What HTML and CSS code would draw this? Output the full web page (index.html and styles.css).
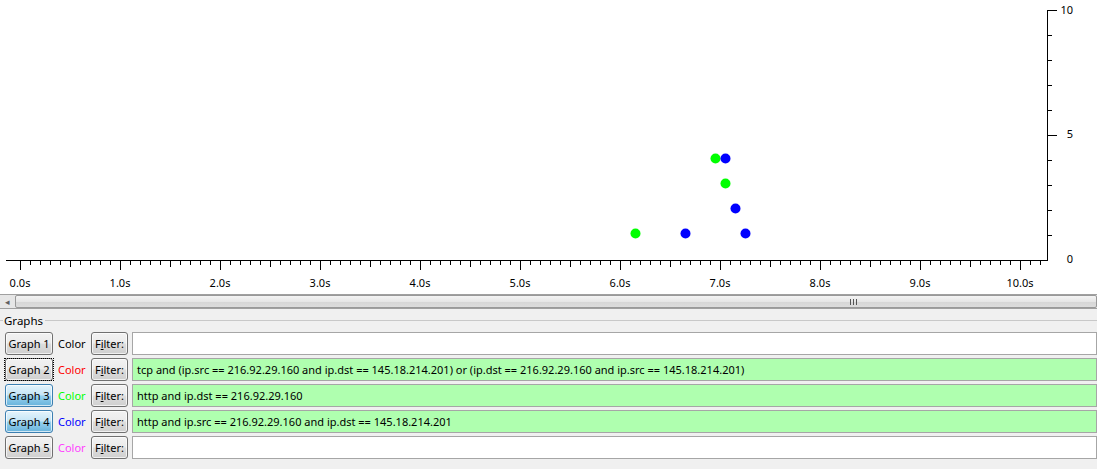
FILE: index.html
```html
<!DOCTYPE html>
<html>
<head>
<meta charset="utf-8">
<link rel="stylesheet" href="styles.css">
</head>
<body>
<div class="page">
  <svg class="plot" width="1097" height="294" viewBox="0 0 1097 294">
    <g stroke="#000" stroke-width="1" fill="none" shape-rendering="crispEdges">
      <path d="M6 260.5H1047.5V10.5H1057"/>
      <path id="ticks" d=""/>
    </g>
    <g class="ylab" font-size="11">
      <text x="1073" y="14" text-anchor="end">10</text>
      <text x="1073" y="138" text-anchor="end">5</text>
      <text x="1073" y="263" text-anchor="end">0</text>
    </g>
    <g class="xlab" font-size="11" text-anchor="middle">
      <text x="20" y="287">0.0s</text>
      <text x="120" y="287">1.0s</text>
      <text x="220" y="287">2.0s</text>
      <text x="320" y="287">3.0s</text>
      <text x="420" y="287">4.0s</text>
      <text x="520" y="287">5.0s</text>
      <text x="620" y="287">6.0s</text>
      <text x="720" y="287">7.0s</text>
      <text x="820" y="287">8.0s</text>
      <text x="920" y="287">9.0s</text>
      <text x="1020" y="287">10.0s</text>
    </g>
    <g>
      <circle cx="635.5" cy="233.5" r="5" fill="#00ff00"/>
      <circle cx="685.5" cy="233.5" r="5" fill="#0000ff"/>
      <circle cx="715.5" cy="158.5" r="5" fill="#00ff00"/>
      <circle cx="725.5" cy="158.5" r="5" fill="#0000ff"/>
      <circle cx="725.5" cy="183.5" r="5" fill="#00ff00"/>
      <circle cx="735.5" cy="208.5" r="5" fill="#0000ff"/>
      <circle cx="745.5" cy="233.5" r="5" fill="#0000ff"/>
    </g>
  </svg>

  <div class="hscroll">
    <span class="arrow">◂</span>
    <div class="thumb"><span class="grip"></span></div>
  </div>

  <div class="group">
    <div class="group-title"><span class="group-label">Graphs</span></div>
    <div class="rows">
      <div class="row">
        <button class="gbtn">Graph 1</button>
        <span class="color c1">Color</span>
        <button class="fbtn">F<u>i</u>lter:</button>
        <div class="filter"></div>
      </div>
      <div class="row">
        <button class="gbtn focus"><span>Graph 2</span></button>
        <span class="color c2">Color</span>
        <button class="fbtn">F<u>i</u>lter:</button>
        <div class="filter on">tcp and (ip.src == 216.92.29.160 and ip.dst == 145.18.214.201) or (ip.dst == 216.92.29.160 and ip.src == 145.18.214.201)</div>
      </div>
      <div class="row">
        <button class="gbtn pressed">Graph 3</button>
        <span class="color c3">Color</span>
        <button class="fbtn">F<u>i</u>lter:</button>
        <div class="filter on">http and ip.dst == 216.92.29.160</div>
      </div>
      <div class="row">
        <button class="gbtn pressed">Graph 4</button>
        <span class="color c4">Color</span>
        <button class="fbtn">F<u>i</u>lter:</button>
        <div class="filter on">http and ip.src == 216.92.29.160 and ip.dst == 145.18.214.201</div>
      </div>
      <div class="row">
        <button class="gbtn">Graph 5</button>
        <span class="color c5">Color</span>
        <button class="fbtn">F<u>i</u>lter:</button>
        <div class="filter"></div>
      </div>
    </div>
  </div>
</div>
<script>
  (function () {
    var d = "";
    for (var x = 20; x <= 1040; x += 10) {
      var i = (x - 20) / 10;
      var len = (i % 10 === 0) ? 10 : (i % 5 === 0 ? 7 : 5);
      d += "M" + (x + 0.5) + " 260V" + (260 + len);
    }
    for (var v = 1; v < 10; v++) {
      var y = 260 - v * 25 + 0.5;
      var l = (v === 5) ? 10 : 5;
      d += "M1047 " + y + "H" + (1047 + l);
    }
    document.getElementById("ticks").setAttribute("d", d);
  })();
</script>
</body>
</html>
```

FILE: styles.css
```css
html, body {
  margin: 0;
  padding: 0;
}
body {
  width: 1097px;
  height: 469px;
  overflow: hidden;
  background: #f0f0f0;
  font-family: "Noto Sans", "Liberation Sans", sans-serif;
  font-size: 11px;
  color: #000;
}
.page {
  display: flex;
  flex-direction: column;
  height: 469px;
}
.plot {
  display: block;
  background: #fff;
  flex: none;
}
.plot text {
  font-family: "Noto Sans", "Liberation Sans", sans-serif;
  fill: #000;
}
.hscroll {
  flex: none;
  height: 15px;
  box-sizing: border-box;
  border-top: 1px solid #a0a0a0;
  border-bottom: 1px solid #a0a0a0;
  background: #e6e6e6;
  display: flex;
  align-items: stretch;
}
.arrow {
  width: 14px;
  font-size: 9px;
  line-height: 13px;
  color: #606060;
  text-align: center;
  flex: none;
}
.thumb {
  flex: 1;
  margin: 0 0 0 1px;
  border: 1px solid #999;
  border-radius: 2px;
  background: linear-gradient(#f4f4f4, #e6e6e6 50%, #d6d6d6 51%, #dcdcdc);
  display: flex;
  justify-content: flex-start;
  align-items: center;
}
.grip {
  display: block;
  width: 7px;
  height: 6px;
  margin-left: 834px;
  background: repeating-linear-gradient(90deg, #555 0 1px, transparent 1px 3px);
}
.group {
  flex: none;
  margin-top: 3px;
}
.group-title {
  display: flex;
  align-items: center;
  height: 16px;
}
.group-title::before {
  content: "";
  width: 3px;
  border-top: 1px solid #c8c8c8;
}
.group-title::after {
  content: "";
  flex: 1;
  border-top: 1px solid #c8c8c8;
  margin-left: 1px;
}
.group-label {
  font-size: 11.5px;
  padding: 0 1px;
}
.rows {
  display: flex;
  flex-direction: column;
  gap: 3px;
  margin-top: 4px;
  padding-left: 5px;
}
.row {
  display: flex;
  align-items: center;
  height: 23px;
}
button {
  font-family: inherit;
  font-size: 11px;
  color: #000;
  height: 23px;
  padding: 0;
  box-sizing: border-box;
  border: 1px solid #707070;
  border-radius: 3px;
  background: linear-gradient(#f2f2f2, #ebebeb 48%, #dddddd 52%, #cfcfcf);
  box-shadow: inset 0 0 0 1px rgba(255,255,255,0.7);
  flex: none;
}
.gbtn {
  width: 48px;
  margin-right: 5px;
}
.gbtn.pressed {
  border-color: #3c7fb1;
  background: linear-gradient(#e5f4fc, #c4e5f6 48%, #98d1ef 52%, #68b3db);
}
.gbtn.focus span {
  outline: 1px dotted #000;
  outline-offset: 3px;
}
.color {
  width: 33px;
  font-size: 11px;
  flex: none;
}
.c1 { color: #000; }
.c2 { color: #ff0000; }
.c3 { color: #00ff00; }
.c4 { color: #0000ff; }
.c5 { color: #ff40ff; }
.fbtn {
  width: 37px;
  margin-right: 4px;
}
.filter {
  flex: 1;
  height: 23px;
  box-sizing: border-box;
  border: 1px solid #a6a6a6;
  background: #fff;
  padding-left: 4px;
  font-size: 11px;
  line-height: 21px;
  white-space: nowrap;
  overflow: hidden;
}
.filter.on {
  background: #afffaf;
}
```
